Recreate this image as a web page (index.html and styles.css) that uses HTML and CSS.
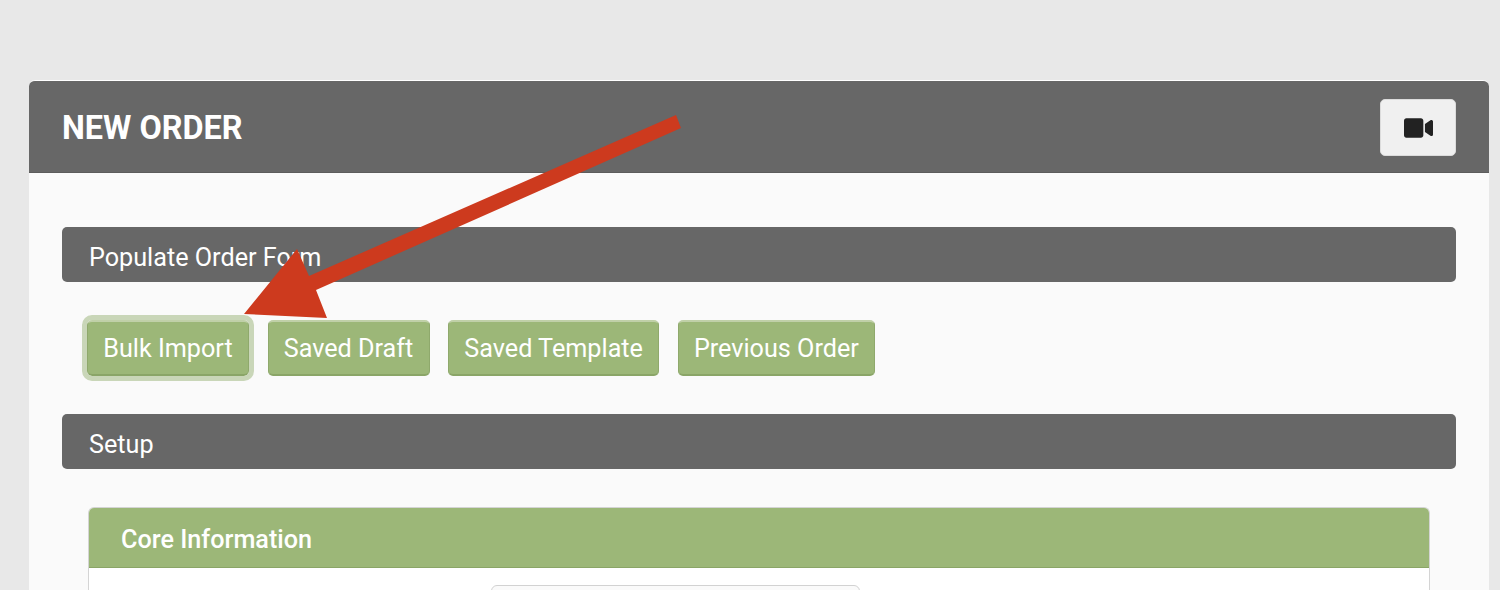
FILE: index.html
```html
<!DOCTYPE html>
<html lang="en">
<head>
    <meta charset="UTF-8">
    <meta name="viewport" content="width=device-width, initial-scale=1.0">
    <title>New Order</title>
    <link rel="stylesheet" href="styles.css">
</head>
<body>
    <main class="card">
        <header class="card-header">
            <h1>NEW ORDER</h1>
            <button class="video-btn" aria-label="Video">
                <svg width="29" height="26" viewBox="0 0 576 512"><path fill="#222" d="M336.2 64H47.8C21.4 64 0 85.4 0 111.8v288.4C0 426.6 21.4 448 47.8 448h288.4c26.4 0 47.8-21.4 47.8-47.8V111.8c0-26.4-21.4-47.8-47.8-47.8zm189.4 37.7L416 177.3v157.4l109.6 75.5c21.2 14.6 50.4-.3 50.4-25.8V127.5c0-25.4-29.1-40.4-50.4-25.8z"/></svg>
            </button>
        </header>
        <div class="card-body">
            <h2 class="section-bar">Populate Order Form</h2>
            <div class="btn-row">
                <button class="green-btn focused">Bulk Import</button>
                <button class="green-btn">Saved Draft</button>
                <button class="green-btn">Saved Template</button>
                <button class="green-btn">Previous Order</button>
            </div>
            <h2 class="section-bar">Setup</h2>
            <section class="panel">
                <h3 class="panel-header">Core Information</h3>
                <div class="panel-body">
                    <div class="field"></div>
                </div>
            </section>
        </div>
    </main>
    <svg class="arrow" width="1500" height="590" viewBox="0 0 1500 590">
        <polygon fill="#cd3a1e" points="676,115 681,128 316,290 327,318 244,314 297,249 309,276"/>
    </svg>
</body>
</html>
```

FILE: styles.css
```css
html, body {
    height: 590px;
    overflow: hidden;
}
body {
    margin: 0;
    padding: 80px 11px 0 29px;
    background: #e8e8e8;
    font-family: Roboto, "Liberation Sans", sans-serif;
    box-sizing: border-box;
}
.card {
    background: #fafafa;
    border-radius: 6px 6px 0 0;
}
.card-header {
    display: flex;
    justify-content: space-between;
    align-items: center;
    height: 93px;
    padding: 0 33px;
    background: #676767;
    border-top: 1px solid #fff;
    border-bottom: 1px solid #5c5c5c;
    border-radius: 6px 6px 0 0;
    box-sizing: border-box;
}
.card-header h1 {
    margin: 2px 0 0;
    color: #fff;
    font-size: 32.4px;
    font-weight: 700;
}
.video-btn {
    display: flex;
    justify-content: center;
    align-items: center;
    width: 76px;
    height: 57px;
    margin-top: 2px;
    padding: 0;
    background: #f0f0f0;
    border: 1px solid #dcdcdc;
    border-radius: 5px;
}
.card-body {
    padding: 54px 33px 0;
}
.section-bar {
    margin: 0;
    height: 55px;
    padding: 0 27px;
    background: #676767;
    border-radius: 5px;
    color: #fff;
    font-size: 25.2px;
    font-weight: 400;
    line-height: 61px;
}
.btn-row {
    display: flex;
    gap: 18.6px;
    padding: 38px 25px;
}
.green-btn {
    height: 56px;
    padding: 0 15.2px;
    background: #9cb778;
    border: 1px solid #8fa96c;
    border-top: 2px solid #c0d0a8;
    border-bottom: 2px solid #8aa567;
    border-radius: 5px;
    color: #fff;
    font-family: inherit;
    font-size: 25.2px;
}
.green-btn.focused {
    outline: 5px solid #c9d6b8;
    border-radius: 5px;
}
.panel {
    margin: 38px 26px 0;
    background: #fff;
    border: 1px solid #d4d4d4;
    border-bottom: 0;
    border-radius: 6px 6px 0 0;
}
.panel-header {
    margin: 0;
    height: 60px;
    padding: 0 32px;
    background: #9cb778;
    border-bottom: 1px solid #8aa567;
    border-radius: 5px 5px 0 0;
    box-sizing: border-box;
    color: #fff;
    font-size: 25.2px;
    font-weight: 500;
    line-height: 63px;
}
.panel-body {
    height: 120px;
    padding: 17px 0 0 402px;
}
.field {
    width: 369px;
    height: 50px;
    background: #fafafa;
    border: 1px solid #d2d2d2;
    border-radius: 6px;
    box-sizing: border-box;
}
.arrow {
    position: absolute;
    top: 0;
    left: 0;
}
```
